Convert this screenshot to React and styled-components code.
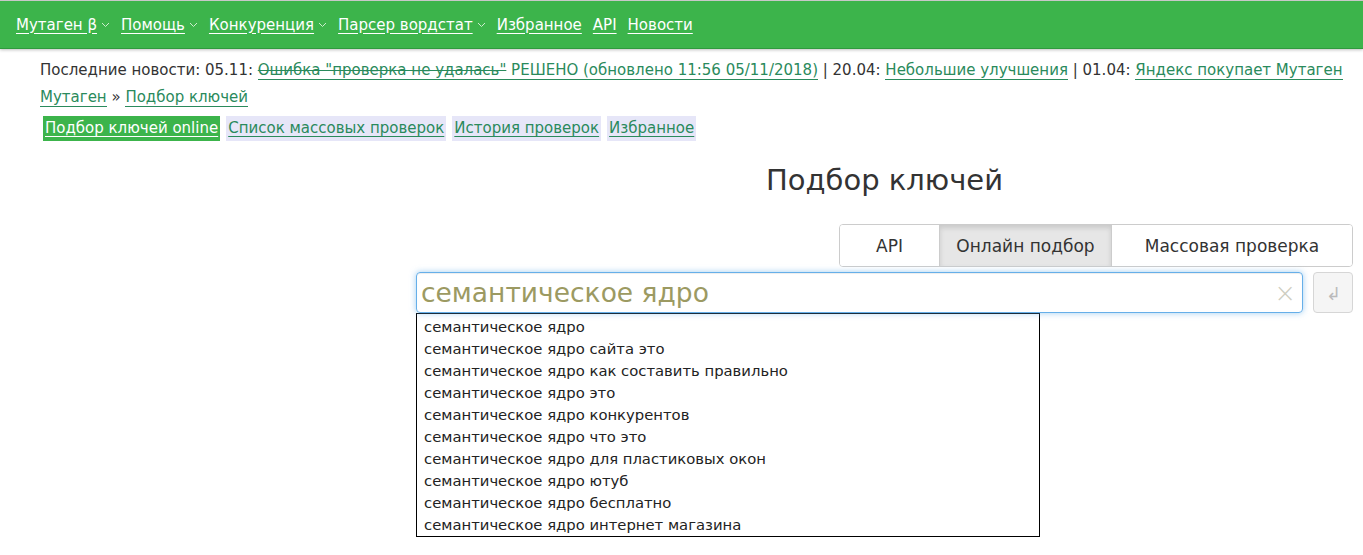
import React from 'react'
import styled, { createGlobalStyle } from 'styled-components'

const GlobalStyle = createGlobalStyle`
  body {
    margin: 0;
    background: #fff;
    font-family: 'DejaVu Sans', Verdana, sans-serif;
    color: #333;
  }
`

const Header = styled.header`
  height: 47px;
  background: #3cb44b;
  border-top: 1px solid #c8c8c8;
  border-bottom: 1px solid #2f9a3e;
  box-shadow: 0 1px 3px rgba(0, 0, 0, 0.25);
  display: flex;
  align-items: center;
  padding: 0 16px;
  gap: 11px;
`

const MenuItem = styled.a`
  color: #fff;
  font-size: 15px;
  text-decoration: underline;
  text-underline-offset: 3px;
  display: flex;
  align-items: center;
  gap: 4px;
`

const Chevron = () => (
  <svg width="9" height="6" viewBox="0 0 9 6">
    <polyline points="1,1 4.5,4.5 8,1" fill="none" stroke="#cdeccd" strokeWidth="1" />
  </svg>
)

const Main = styled.div`
  padding: 8px 0 0 40px;
  font-size: 15px;
`

const Line = styled.div`
  line-height: 27px;
  white-space: nowrap;
`

const Link = styled.a`
  color: #2a8a5c;
  text-decoration: none;
  border-bottom: 1px solid #2a8a5c;
  text-decoration-line: ${(p) => (p.strike ? 'line-through' : 'none')};
`

const Tabs = styled.div`
  display: flex;
  gap: 6px;
  margin-top: 5px;
  margin-left: 3px;
`

const Tab = styled.a`
  display: block;
  padding: 2px;
  line-height: 21px;
  background: ${(p) => (p.active ? '#3cb44b' : '#e6e6f8')};
  color: ${(p) => (p.active ? '#fff' : '#2a8a5c')};
  text-decoration: underline;
  text-underline-offset: 3px;
`

const Content = styled.div`
  padding: 0 10px 0 416px;
`

const Title = styled.h1`
  margin: 22px 0 27px;
  text-align: center;
  font-weight: normal;
  font-size: 29px;
  color: #333;
`

const Switch = styled.div`
  display: flex;
  justify-content: flex-end;
`

const SwitchGroup = styled.div`
  display: flex;
  border: 1px solid #ccc;
  border-radius: 4px;
  overflow: hidden;
`

const SwitchButton = styled.button`
  height: 41px;
  width: ${(p) => p.w}px;
  padding: 0;
  border: none;
  border-left: ${(p) => (p.first ? 'none' : '1px solid #ccc')};
  background: ${(p) => (p.active ? '#e6e6e6' : '#fff')};
  box-shadow: ${(p) => (p.active ? 'inset 0 3px 5px rgba(0,0,0,0.125)' : 'none')};
  font-family: 'DejaVu Sans', Verdana, sans-serif;
  font-size: 17px;
  color: #333;
`

const SearchRow = styled.div`
  display: flex;
  gap: 10px;
  margin-top: 5px;
`

const InputCol = styled.div`
  flex: 1;
`

const Input = styled.div`
  position: relative;
  height: 39px;
  border: 1px solid #66afe9;
  border-radius: 4px;
  box-shadow: inset 0 1px 1px rgba(0, 0, 0, 0.075), 0 0 6px rgba(102, 175, 233, 0.6);
  display: flex;
  align-items: center;
  padding: 0 4px;
  font-size: 26.5px;
  color: #9c9a62;
`

const Clear = styled.span`
  position: absolute;
  right: 6px;
  top: 5px;
  font-size: 26px;
  font-weight: 300;
  color: #cdcdc0;
`

const EnterButton = styled.button`
  width: 40px;
  height: 41px;
  border: 1px solid #ccc;
  border-radius: 4px;
  background: #f3f3f3;
  color: #aaa;
  font-size: 18px;
  padding-top: 4px;
  opacity: 0.8;
`

const Dropdown = styled.ul`
  width: 622px;
  margin: 0;
  padding: 2px 0 0;
  list-style: none;
  border: 1px solid #000;
  background: #fff;
`

const Option = styled.li`
  height: 22px;
  line-height: 22px;
  padding-left: 7px;
  font-size: 14.8px;
  color: #222;
`

const menu = [
  { label: 'Мутаген β', sub: true },
  { label: 'Помощь', sub: true },
  { label: 'Конкуренция', sub: true },
  { label: 'Парсер вордстат', sub: true },
  { label: 'Избранное' },
  { label: 'API' },
  { label: 'Новости' },
]

const suggestions = [
  'семантическое ядро',
  'семантическое ядро сайта это',
  'семантическое ядро как составить правильно',
  'семантическое ядро это',
  'семантическое ядро конкурентов',
  'семантическое ядро что это',
  'семантическое ядро для пластиковых окон',
  'семантическое ядро ютуб',
  'семантическое ядро бесплатно',
  'семантическое ядро интернет магазина',
]

const App = () => {
  return (
    <>
      <GlobalStyle />
      <Header>
        {menu.map((m) => (
          <MenuItem key={m.label} href="#">
            {m.label}
            {m.sub && <Chevron />}
          </MenuItem>
        ))}
      </Header>

      <Main>
        <Line>
          Последние новости: 05.11: <Link strike href="#">Ошибка "проверка не удалась"</Link>
          <Link href="#"> РЕШЕНО (обновлено 11:56 05/11/2018)</Link> | 20.04:{' '}
          <Link href="#">Небольшие улучшения</Link> | 01.04:{' '}
          <Link href="#">Яндекс покупает Мутаген</Link>
        </Line>
        <Line>
          <Link href="#">Мутаген</Link> » <Link href="#">Подбор ключей</Link>
        </Line>
        <Tabs>
          <Tab active href="#">Подбор ключей online</Tab>
          <Tab href="#">Список массовых проверок</Tab>
          <Tab href="#">История проверок</Tab>
          <Tab href="#">Избранное</Tab>
        </Tabs>
      </Main>

      <Content>
        <Title>Подбор ключей</Title>
        <Switch>
          <SwitchGroup>
            <SwitchButton first w={99}>API</SwitchButton>
            <SwitchButton active w={172}>Онлайн подбор</SwitchButton>
            <SwitchButton w={241}>Массовая проверка</SwitchButton>
          </SwitchGroup>
        </Switch>
        <SearchRow>
          <InputCol>
            <Input>
              семантическое ядро
              <Clear>×</Clear>
            </Input>
            <Dropdown>
              {suggestions.map((s) => (
                <Option key={s}>{s}</Option>
              ))}
            </Dropdown>
          </InputCol>
          <EnterButton>↲</EnterButton>
        </SearchRow>
      </Content>
    </>
  )
}

export default App
